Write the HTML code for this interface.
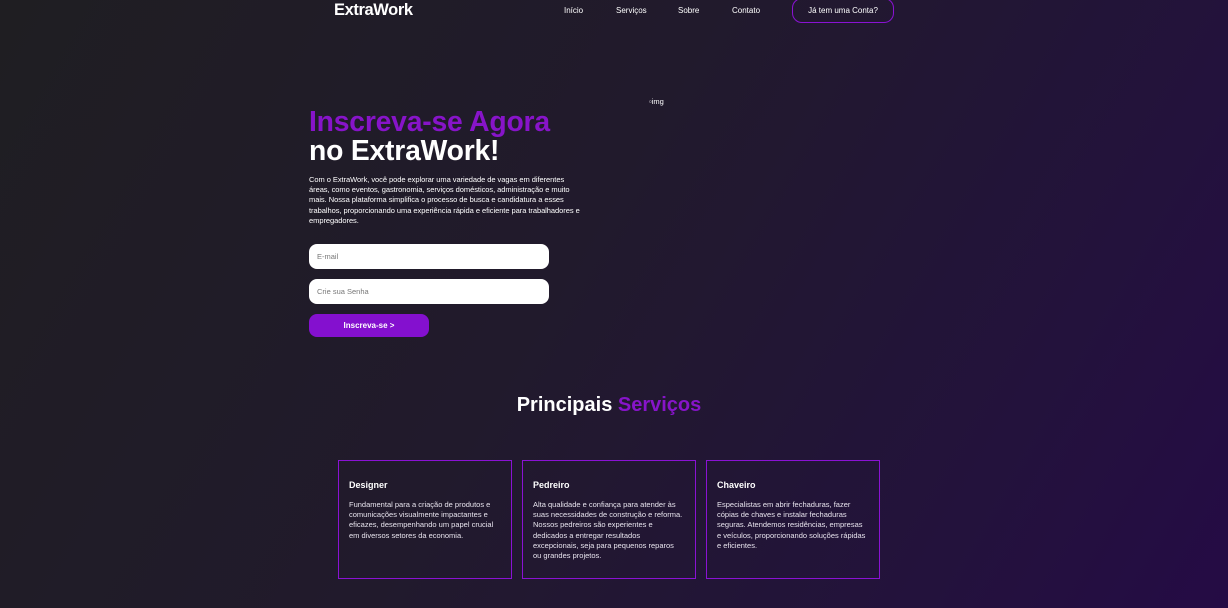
<!DOCTYPE html>
<html><head><meta charset="utf-8"><style>
*{margin:0;padding:0;box-sizing:border-box}
body{width:1228px;height:608px;overflow:hidden;font-family:"Liberation Sans",sans-serif;color:#fff;
background:linear-gradient(120deg,#1f1e22 0%,#211a2c 45%,#23123c 80%,#250b45 100%);position:relative}
.abs{position:absolute}
.logo{left:334px;top:1px;font-size:16.5px;font-weight:bold;letter-spacing:-0.4px}
.nav{top:6px;font-size:8px}
.btn{left:792px;top:-2px;width:102px;height:25px;border:1px solid #8a12d4;border-radius:10px;font-size:8px;display:flex;align-items:center;justify-content:center}
h1{position:absolute;left:309px;top:107px;font-size:28.3px;line-height:29px;font-weight:bold;letter-spacing:-0.2px}
h1 span{color:#8714c9}
.p{left:309px;top:175px;width:272px;font-size:7.5px;line-height:10.2px;letter-spacing:-0.05px}
.inp{left:309px;width:240px;height:25px;background:#fff;border-radius:8px;color:#777;font-size:7.5px;padding-left:8px;display:flex;align-items:center}
.sub{left:309px;top:314px;width:120px;height:23px;background:#8410cf;border-radius:8px;font-size:8px;font-weight:bold;display:flex;align-items:center;justify-content:center}
h2{position:absolute;left:0;width:1218px;text-align:center;top:394px;font-size:20px;font-weight:bold}
h2 span{color:#8714c9}
.card{top:460px;width:174px;height:119px;border:1px solid #8a12d4;padding:19px 10px}
.card b{display:block;font-size:9px;margin-bottom:10px}
.card p{font-size:7.5px;line-height:10.2px;color:#e8e4ee;width:150px}
</style></head><body>
<div class="abs logo">ExtraWork</div>
<div class="abs nav" style="left:564px">Início</div>
<div class="abs nav" style="left:616px">Serviços</div>
<div class="abs nav" style="left:678px">Sobre</div>
<div class="abs nav" style="left:732px">Contato</div>
<div class="abs btn">Já tem uma Conta?</div>
<div class="abs" style="left:649px;top:97px;font-size:7.5px">▫img</div>
<h1><span>Inscreva-se Agora</span><br>no ExtraWork!</h1>
<div class="abs p">Com o ExtraWork, você pode explorar uma variedade de vagas em diferentes áreas, como eventos, gastronomia, serviços domésticos, administração e muito mais. Nossa plataforma simplifica o processo de busca e candidatura a esses trabalhos, proporcionando uma experiência rápida e eficiente para trabalhadores e empregadores.</div>
<div class="abs inp" style="top:244px">E-mail</div>
<div class="abs inp" style="top:279px">Crie sua Senha</div>
<div class="abs sub">Inscreva-se &gt;</div>
<h2>Principais <span>Serviços</span></h2>
<div class="abs card" style="left:338px"><b>Designer</b><p>Fundamental para a criação de produtos e comunicações visualmente impactantes e eficazes, desempenhando um papel crucial em diversos setores da economia.</p></div>
<div class="abs card" style="left:522px"><b>Pedreiro</b><p>Alta qualidade e confiança para atender às suas necessidades de construção e reforma. Nossos pedreiros são experientes e dedicados a entregar resultados excepcionais, seja para pequenos reparos ou grandes projetos.</p></div>
<div class="abs card" style="left:706px"><b>Chaveiro</b><p>Especialistas em abrir fechaduras, fazer cópias de chaves e instalar fechaduras seguras. Atendemos residências, empresas e veículos, proporcionando soluções rápidas e eficientes.</p></div>
</body></html>
